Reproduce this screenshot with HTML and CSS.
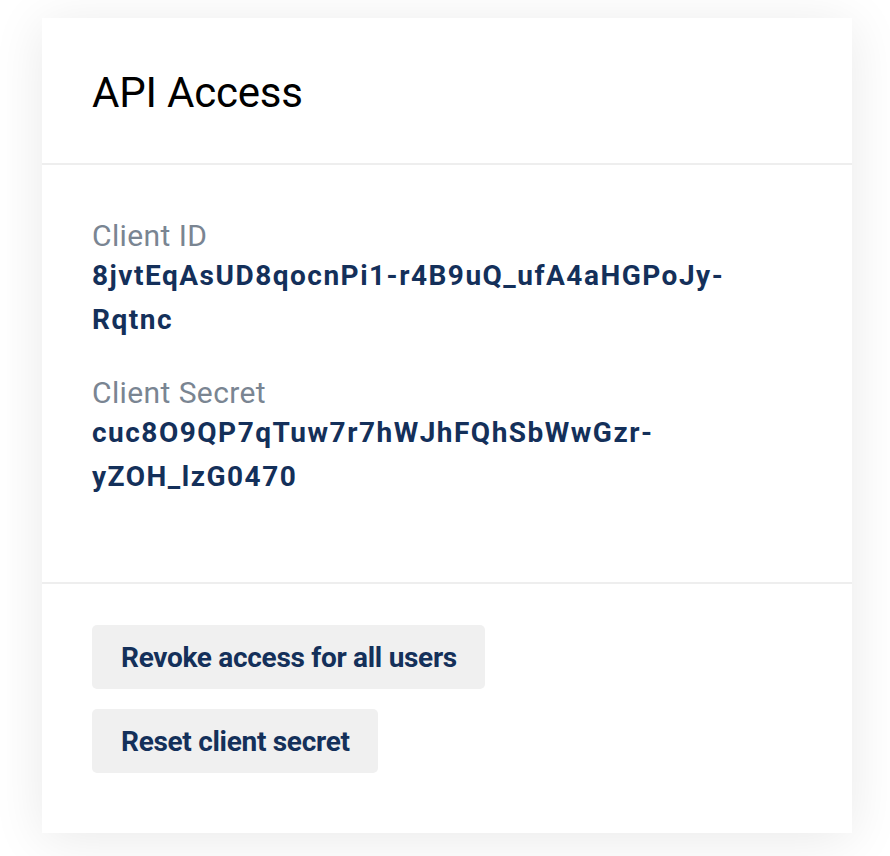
FILE: index.html
```html
<!DOCTYPE html>
<html lang="en">
<head>
<meta charset="utf-8">
<title>API Access</title>
<link rel="stylesheet" href="styles.css">
</head>
<body>
<div class="page">
  <section class="card">
    <header class="card-header">
      <h1 class="title">API Access</h1>
    </header>
    <div class="card-body">
      <div class="field">
        <div class="label">Client ID</div>
        <div class="value">8jvtEqAsUD8qocnPi1-r4B9uQ_ufA4aHGPoJy-Rqtnc</div>
      </div>
      <div class="field">
        <div class="label">Client Secret</div>
        <div class="value">cuc8O9QP7qTuw7r7hWJhFQhSbWwGzr-yZOH_lzG0470</div>
      </div>
    </div>
    <footer class="card-footer">
      <button class="btn" type="button">Revoke access for all users</button>
      <button class="btn" type="button">Reset client secret</button>
    </footer>
  </section>
</div>
</body>
</html>
```

FILE: styles.css
```css
* { box-sizing: border-box; }

html, body {
  margin: 0;
  background: #ffffff;
}

body {
  font-family: Roboto, "Liberation Sans", sans-serif;
}

.page {
  padding: 18px 38px 24px 42px;
}

.card {
  width: 810px;
  background: #ffffff;
  box-shadow: 0 6px 50px rgba(0, 0, 0, 0.09);
}

.card-header {
  padding: 50px 50px 45px;
  border-bottom: 2px solid #eeeeee;
}

.title {
  margin: 0;
  font-size: 42px;
  line-height: 50px;
  font-weight: 400;
  color: #000000;
  letter-spacing: -0.2px;
}

.card-body {
  padding: 53px 50px 50px;
  border-bottom: 2px solid #eeeeee;
}

.field {
  margin-bottom: 33px;
}

.label {
  font-size: 30px;
  line-height: 36px;
  color: #7a8592;
  letter-spacing: 0.4px;
}

.value {
  font-size: 28px;
  line-height: 44px;
  font-weight: 700;
  color: #14305a;
  letter-spacing: 1.5px;
  max-width: 710px;
}

.card-footer {
  padding: 41px 50px 60px;
  display: flex;
  flex-direction: column;
  align-items: flex-start;
  gap: 20px;
}

.btn {
  height: 64px;
  padding: 0 28px 0 29px;
  border: none;
  border-radius: 5px;
  background: #f0f0f0;
  font-family: Roboto, "Liberation Sans", sans-serif;
  font-size: 28px;
  font-weight: 700;
  color: #14305a;
  letter-spacing: -0.3px;
  cursor: pointer;
}
```
